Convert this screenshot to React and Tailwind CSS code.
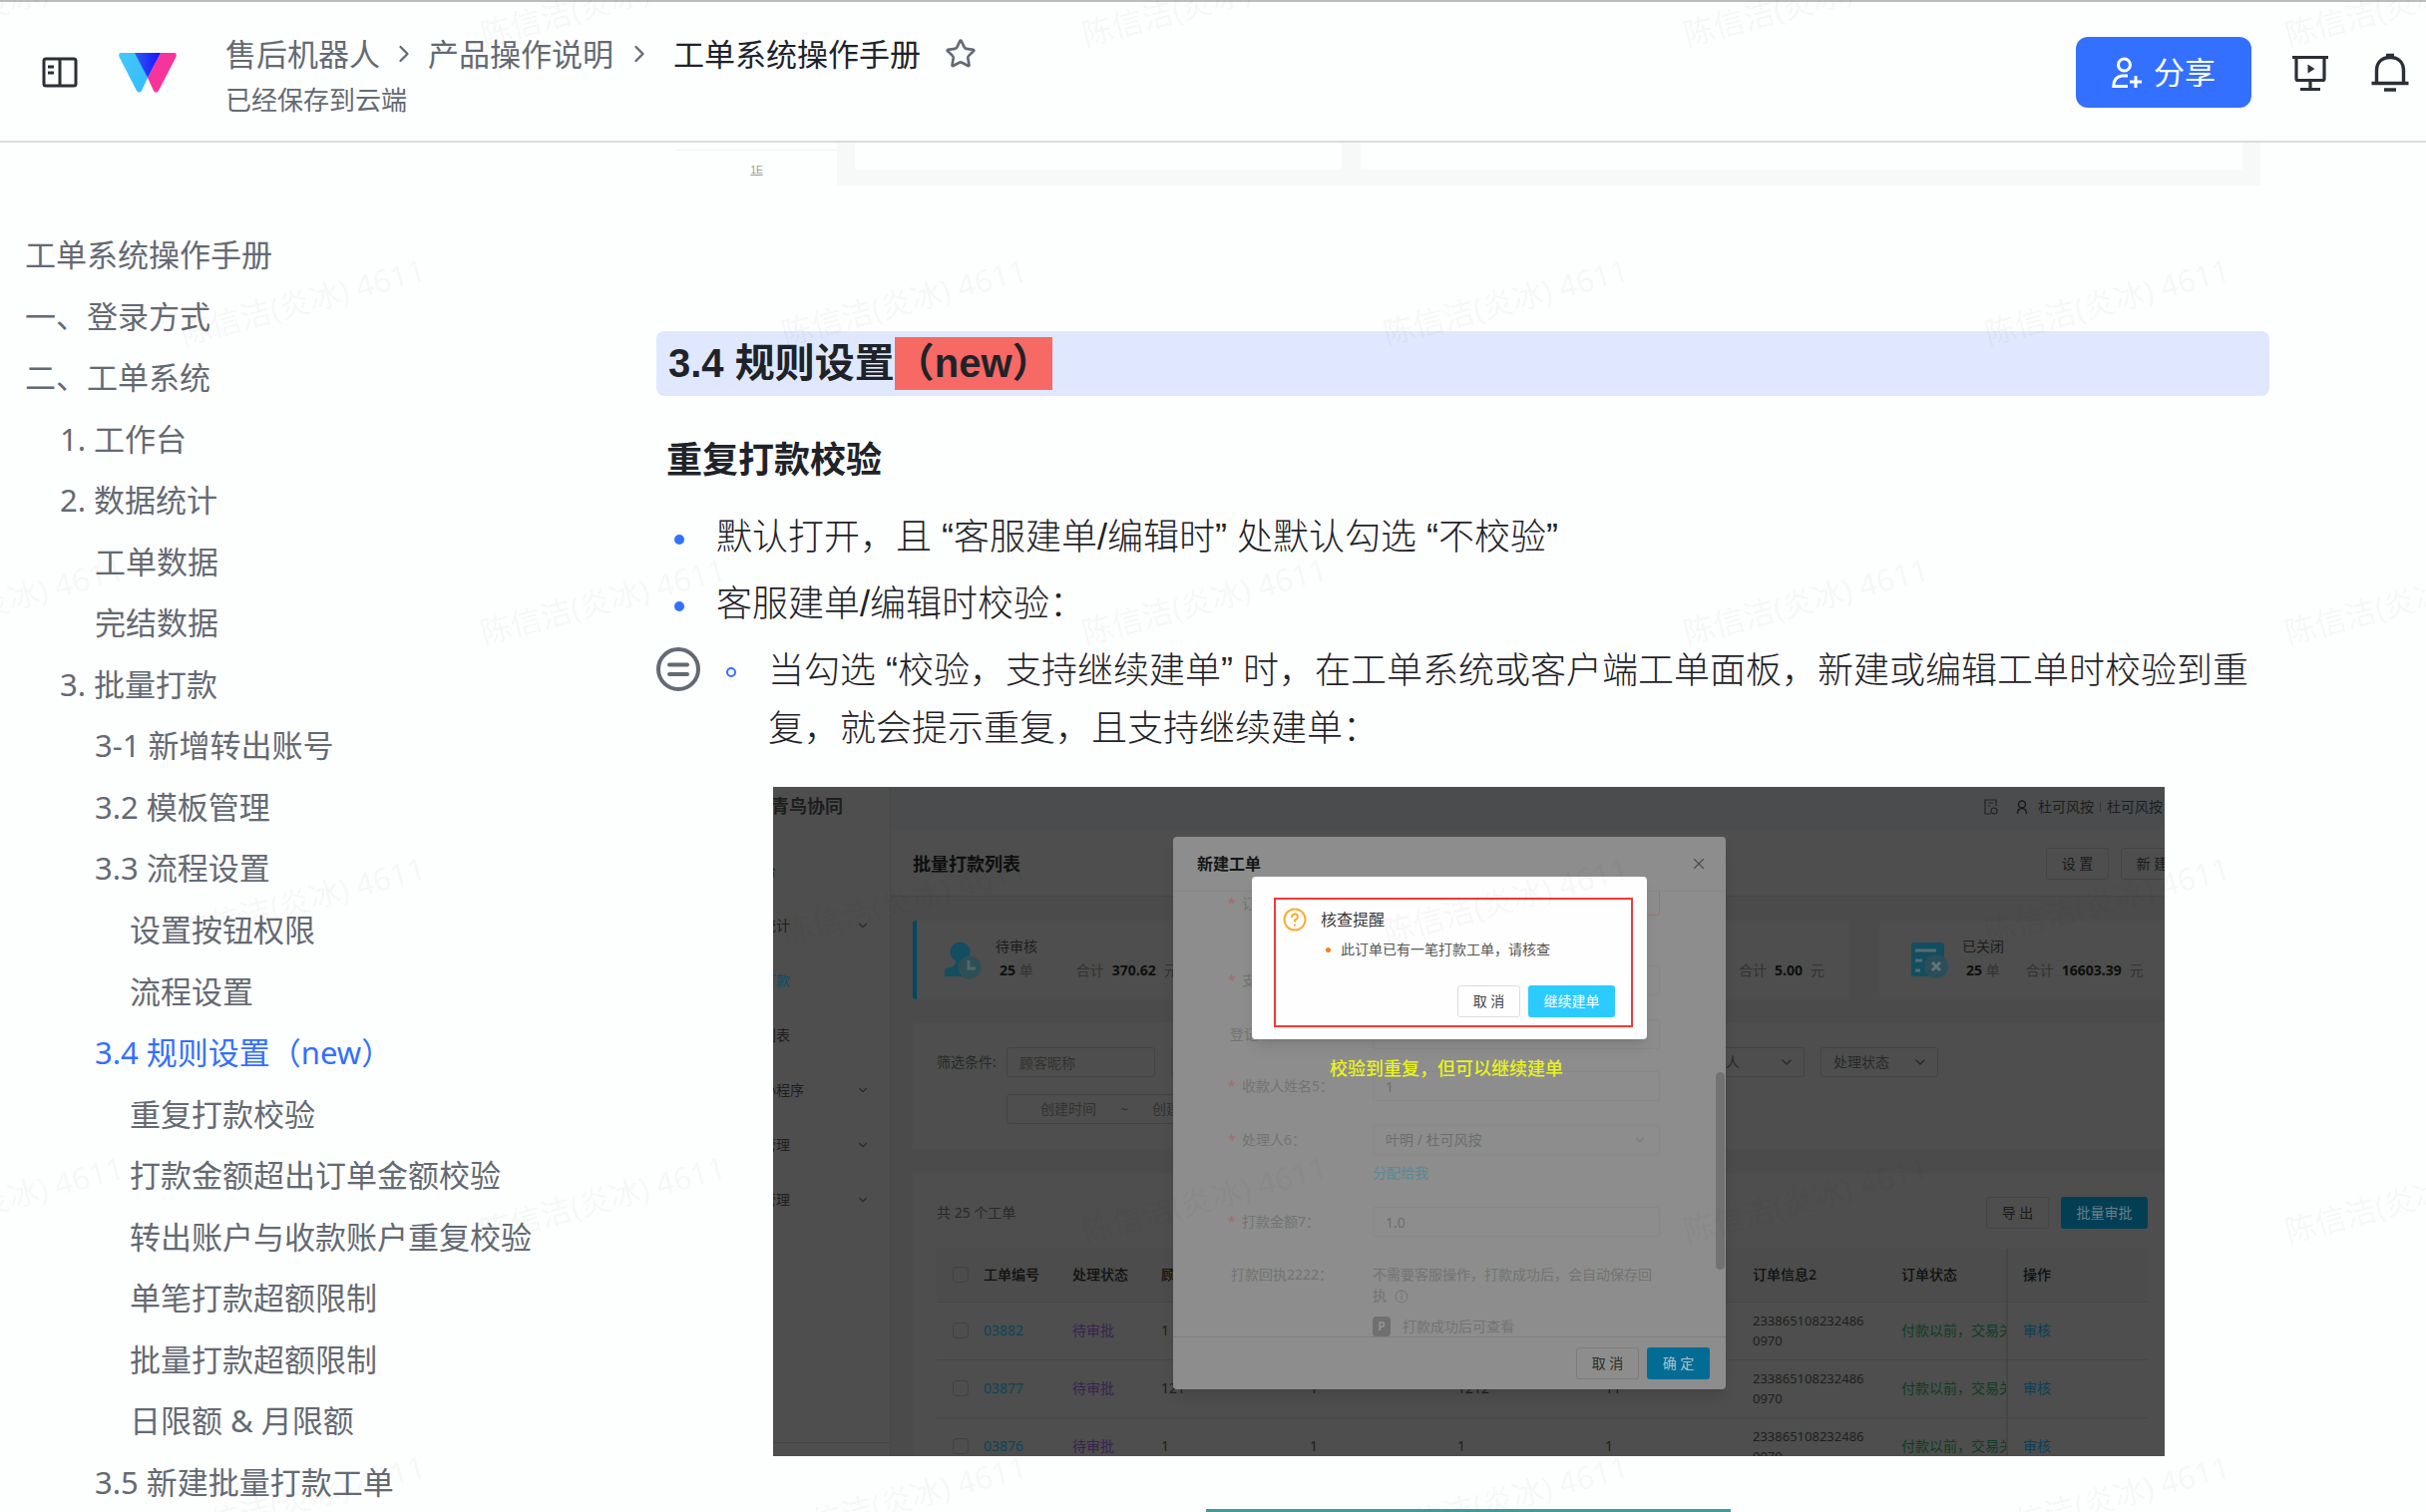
import React from "react";
import { ChevronRight, ChevronDown, X, Star } from "lucide-react";

const outline = [
  ["工单系统操作手册", 0],
  ["一、登录方式", 0],
  ["二、工单系统", 0],
  ["1. 工作台", 1],
  ["2. 数据统计", 1],
  ["工单数据", 2],
  ["完结数据", 2],
  ["3. 批量打款", 1],
  ["3-1 新增转出账号", 2],
  ["3.2 模板管理", 2],
  ["3.3 流程设置", 2],
  ["设置按钮权限", 3],
  ["流程设置", 3],
  ["3.4 规则设置（new）", 2, true],
  ["重复打款校验", 3],
  ["打款金额超出订单金额校验", 3],
  ["转出账户与收款账户重复校验", 3],
  ["单笔打款超额限制", 3],
  ["批量打款超额限制", 3],
  ["日限额 & 月限额", 3],
  ["3.5 新建批量打款工单", 2],
];

const indents = ["pl-[25px]", "pl-[60px]", "pl-[95px]", "pl-[130px]"];

function Logo() {
  return (
    <svg viewBox="0 0 58 40" className="h-10 w-[58px]" aria-hidden="true">
      <defs>
        <linearGradient id="lg-blue" x1="0" x2="1" y1="0" y2="0">
          <stop offset="0" stopColor="#2a5cf0" />
          <stop offset="1" stopColor="#1a10ff" />
        </linearGradient>
        <linearGradient id="lg-cyan" x1="0" x2="1" y1="0" y2="1">
          <stop offset="0" stopColor="#45c8fb" />
          <stop offset="1" stopColor="#30bdf8" />
        </linearGradient>
      </defs>
      <path d="M2 0 H17 L29 25 L23 38 Q20.500 41 18 38 L0.500 4 Q-0.500 0 2 0Z" fill="url(#lg-cyan)" />
      <path d="M42 0 H56 Q58.500 0 57.500 4 L40 38 Q37.500 41 35 38 L29 25Z" fill="#f5359c" />
      <path d="M16 0 H42 L29 25Z" fill="url(#lg-blue)" />
    </svg>
  );
}

function Header() {
  return (
    <header className="flex h-[143px] shrink-0 items-center border-t-2 border-b-2 border-t-[#bcbcbc] border-b-[#dadcdb] pt-0.5 pr-[17px] pl-[42px] text-[#2b2f36]">
      <button aria-label="目录" className="h-9 w-9">
        <svg viewBox="0 0 36 36" className="h-9 w-9" fill="none" stroke="currentColor" strokeWidth="3">
          <rect x="2" y="4" width="32" height="27" rx="2" />
          <path d="M18 4V31M6 12h6M6 18h6" />
        </svg>
      </button>
      <a href="#home" aria-label="主页" className="ml-[41px]">
        <Logo />
      </a>
      <div className="ml-[49px] flex flex-col gap-1 pt-1.5">
        <nav aria-label="路径" className="flex items-center text-[31px] leading-[44px] text-[#646a73]">
          <a href="#robot">售后机器人</a>
          <ChevronRight className="mx-2.5 h-7 w-7" strokeWidth={2} />
          <a href="#product">产品操作说明</a>
          <ChevronRight className="mr-5 ml-3 h-7 w-7" strokeWidth={2} />
          <span className="text-[#1f2329]">工单系统操作手册</span>
          <button aria-label="收藏" className="ml-6">
            <Star className="h-8 w-8" strokeWidth={2} />
          </button>
        </nav>
        <div className="text-[26px] leading-[40px] text-[#646a73]">已经保存到云端</div>
      </div>
      <button className="ml-auto flex h-[71px] w-44 items-center justify-center gap-3 rounded-xl bg-[#3370ff] text-[31px] text-white">
        <svg viewBox="0 0 30 32" className="h-8 w-[30px]" fill="none" stroke="currentColor" strokeWidth="3">
          <circle cx="12.500" cy="8" r="6" />
          <path d="M16 19H10Q2 20 1.800 29.500H16" />
          <path d="M18 25H30M24 19V31" />
        </svg>
        分享
      </button>
      <button aria-label="演示" className="ml-10">
        <svg viewBox="0 0 38 38" className="h-[38px] w-[38px]" fill="none" stroke="currentColor" strokeWidth="3.200">
          <path d="M1 3.500H37M5 3.500V25Q5 26.500 6.500 26.500H31.500Q33 26.500 33 25V3.500M19 27V35M9 35.500H29" />
          <path d="M16.500 10.500L23.500 15L16.500 19.500Z" fill="currentColor" stroke="none" />
        </svg>
      </button>
      <button aria-label="通知" className="ml-[42px]">
        <svg viewBox="0 0 38 40" className="h-10 w-[38px]" fill="none" stroke="currentColor" strokeWidth="3.400">
          <path d="M5.500 30V18C5.500 9 11 4.500 19 4.500S32.500 9 32.500 18V30M0.500 30.500H37.500M13 37H25M15 2.500H23" />
        </svg>
      </button>
    </header>
  );
}

function Outline() {
  return (
    <aside className="flex w-[658px] shrink-0 flex-col pt-[82px]">
      <nav aria-label="目录" className="flex flex-1 flex-col justify-between text-[31px] leading-[60px] text-[#646a73]">
        {outline.map(([label, level, active], i) => (
          <a
            key={i}
            href={"#s" + i}
            className={`${indents[level]} h-[60px] whitespace-nowrap ${active ? "text-[#3370ff]" : ""}`}
          >
            {label}
          </a>
        ))}
      </nav>
    </aside>
  );
}

const menu = [
  ["台", false],
  ["统计", true],
  ["打款", false, true],
  ["列表", false],
  ["小程序", true],
  ["管理", true],
  ["管理", true],
];

function StatusIcon({ closed }) {
  return (
    <svg viewBox="0 0 38 38" className="h-[38px] w-[38px] shrink-0" aria-hidden="true">
      {closed ? (
        <>
          <rect x="0" y="1" width="33" height="34" rx="3" fill="#124e60" />
          <path d="M4 9H25M4 19H11M4 29H9" stroke="#5a6b70" strokeWidth="3" />
          <circle cx="25" cy="25" r="12" fill="#2b4f5a" />
          <path d="M21 21L29 29M29 21L21 29" stroke="#647478" strokeWidth="3" />
        </>
      ) : (
        <>
          <circle cx="15.500" cy="10.500" r="10" fill="#124e60" />
          <path d="M11 17H21V23L30 27V35H0V30Q0 26 5 26Q10 25 11 22Z" fill="#124e60" />
          <circle cx="25" cy="26" r="11.500" fill="#2f4f57" />
          <path d="M24 19V27H31" fill="none" stroke="#56656a" strokeWidth="3" />
        </>
      )}
    </svg>
  );
}

function StatCard({ accent, closed, label, count, total, gap }) {
  return (
    <div
      className={`flex h-[79px] w-[294px] shrink-0 items-center rounded-[3px] bg-[#4d4e4d] ${
        accent ? "border-l-4 border-[#034860] pl-[28px]" : "pl-8"
      }`}
    >
      {label && (
        <>
          <StatusIcon closed={closed} />
          <div className="mb-1 ml-[13px]">
            <div className="leading-6 text-[#1c1d1c]">{label}</div>
            <div className="flex gap-1.5 pl-1 leading-6 whitespace-nowrap text-[#323332]">
              <span>
                <b className="text-[#0e0f0e]">{count}</b> 单
              </span>
              <span className={gap}>合计</span>
              <b className="ml-0.5 text-[#0e0f0e]">{total}</b>
              <span className="ml-0.5">元</span>
            </div>
          </div>
        </>
      )}
      {!label && total && (
        <div className="mt-5 ml-[150px] flex gap-2 text-[#323332]">
          合计 <b className="text-[#0e0f0e]">{total}</b> 元
        </div>
      )}
    </div>
  );
}

const rows = [
  ["03882", "1", "1", "1", "1"],
  ["03877", "121", "1", "1212", "11"],
  ["03876", "1", "1", "1", "1"],
];

const darkButton = "h-8 w-[63px] shrink-0 rounded-[3px] border border-[#434443] bg-[#4d4e4d] text-[#1a1b1a]";

function ListScreen() {
  return (
    <div className="flex h-full bg-[#4a4b4a] text-sm text-[#1d1e1d]">
      <div className="flex w-[118px] shrink-0 flex-col border-r border-[#464746] bg-[#4d4e4d]">
        <div className="-ml-0.5 h-14 text-lg leading-[38px] font-bold whitespace-nowrap">青鸟协同</div>
        {menu.map(([label, more, active], i) => (
          <a
            key={i}
            href={"#menu" + i}
            className={`flex h-[55px] items-center justify-between pr-5 ${active ? "text-[#0a4d68]" : ""}`}
          >
            <span className="-ml-[11px]">{label}</span>
            {more && <ChevronDown className="h-3.5 w-3.5 text-[#2b2c2b]" />}
          </a>
        ))}
        <div className="mt-auto h-[14px] border-t border-[#434443]" />
      </div>

      <div className="min-w-0 flex-1">
        <div className="flex h-[43px] items-center justify-end bg-[#4a4c4e] pr-0.5 pb-1">
          <svg viewBox="0 0 14 16" className="h-4 w-3.5" fill="none" stroke="#222" strokeWidth="1.200">
            <path d="M12 7V1H1V15H7M4 4H9M4 7H6" />
            <circle cx="10" cy="12" r="3" />
          </svg>
          <svg viewBox="0 0 12 14" className="mr-2.5 ml-[18px] h-3.5 w-3" fill="none" stroke="#1a1a1a" strokeWidth="1.400">
            <circle cx="6" cy="4.500" r="3.500" />
            <path d="M1.500 14Q1.500 8.500 6 8.500T10.500 14" />
          </svg>
          <span>杜可风按</span>
          <span className="mx-1.5 h-2.5 w-px bg-[#353635]" />
          <span>杜可风按</span>
        </div>

        <div className="flex h-[67px] items-center gap-3 overflow-hidden border-b border-[#454645] bg-[#4d4e4d] pt-0.5 pl-[22px]">
          <h4 className="mr-auto text-lg font-bold text-[#0e0f0e]">批量打款列表</h4>
          <button className={darkButton}>设 置</button>
          <button className={`${darkButton} -mr-[19px]`}>新 建</button>
        </div>

        <div className="mt-6 flex gap-[29px] overflow-hidden pl-[22px]">
          <StatCard accent label="待审核" count="25" total="370.62" gap="ml-[37px]" />
          <StatCard />
          <StatCard total="5.00" />
          <StatCard closed label="已关闭" count="25" total="16603.39" gap="ml-5" />
        </div>

        <div className="mt-[23px] ml-[22px] h-[127px] bg-[#4d4e4d] pt-[25px] pl-6 text-[#282928]">
          <div className="flex h-[30px] items-center">
            <label htmlFor="nick" className="w-[70px] shrink-0">
              筛选条件:
            </label>
            <input
              id="nick"
              placeholder="顾客昵称"
              className="h-[30px] w-[149px] rounded-[3px] border border-[#424342] bg-transparent px-3 placeholder:text-[#313231]"
            />
            <span className="ml-4 h-[30px] w-[150px] rounded-[3px] border border-[#424342]" />
            <button className="mr-4 ml-auto flex h-[30px] w-[118px] items-center justify-between rounded-[3px] border border-[#424342] pr-[9px] pl-[38px]">
              人 <ChevronDown className="h-4 w-4" />
            </button>
            <button className="mr-[227px] flex h-[30px] w-[118px] items-center justify-between rounded-[3px] border border-[#424342] pr-[9px] pl-3">
              处理状态 <ChevronDown className="h-4 w-4" />
            </button>
          </div>
          <div className="mt-[17px] ml-[70px] flex h-[30px] w-[260px] items-center rounded-[3px] border border-[#424342] pl-[33px] text-[#313231]">
            创建时间 <span className="mx-6">~</span> 创建时间
          </div>
        </div>

        <div className="mt-6 ml-[22px] bg-[#4d4e4d] pt-6 pr-[17px] pl-6">
          <div className="flex h-8 items-center gap-3">
            <span className="mr-auto text-[#282928]">共 25 个工单</span>
            <button className={darkButton}>导 出</button>
            <button className="h-8 w-[87px] rounded-[3px] bg-[#023f54] text-[#6a7d84]">批量审批</button>
          </div>
          <table className="mt-5 w-full table-fixed text-left">
            <colgroup>
              <col className="w-[47px]" />
              <col className="w-[89px]" />
              <col className="w-[89px]" />
              <col className="w-[149px]" />
              <col className="w-[148px]" />
              <col className="w-[148px]" />
              <col className="w-[148px]" />
              <col className="w-[149px]" />
              <col className="w-[106px]" />
              <col />
            </colgroup>
            <thead>
              <tr className="h-[53px] border-b border-[#454645] bg-[#4b4c4b] text-[#0f100f]">
                <th className="pl-4">
                  <input type="checkbox" aria-label="全选" className="block h-4 w-4 appearance-none rounded-sm border border-[#404140]" />
                </th>
                <th className="font-medium">工单编号</th>
                <th className="font-medium">处理状态</th>
                <th className="font-medium">顾客</th>
                <th />
                <th />
                <th />
                <th className="font-medium">订单信息2</th>
                <th className="font-medium">订单状态</th>
                <th className="border-l-2 border-[#444544] pl-[15px] font-medium">操作</th>
              </tr>
            </thead>
            <tbody>
              {rows.map((r) => (
                <tr key={r[0]} className="h-[58px] border-b border-[#454645]">
                  <td className="pl-4">
                    <input type="checkbox" aria-label={r[0]} className="block h-4 w-4 appearance-none rounded-sm border border-[#404140]" />
                  </td>
                  <td className="text-[#0d4458]">
                    <a href={"#o" + r[0]}>{r[0]}</a>
                  </td>
                  <td className="text-[#38234f]">待审批</td>
                  <td>{r[1]}</td>
                  <td>{r[2]}</td>
                  <td>{r[3]}</td>
                  <td>{r[4]}</td>
                  <td className="text-[13px] leading-5">
                    233865108232486
                    <br />
                    0970
                  </td>
                  <td className="overflow-hidden whitespace-nowrap text-[#0f3d24]">付款以前，交易关闭</td>
                  <td className="border-l-2 border-[#444544] pl-[15px] text-[#0a3f5c]">
                    <a href={"#a" + r[0]}>审核</a>
                  </td>
                </tr>
              ))}
            </tbody>
          </table>
        </div>
      </div>
    </div>
  );
}

function Field({ id, label, required, className, children }) {
  return (
    <div className={`flex ${className}`}>
      <label htmlFor={id} className="flex w-[145px] shrink-0 gap-1.5 self-center pl-0.5 whitespace-nowrap">
        {required && <span className="-ml-0.5 w-2 text-[#a86a6b]">*</span>}
        {label}
      </label>
      {children}
    </div>
  );
}

const grayInput = "h-[30px] w-72 rounded-[3px] border border-[#868786] bg-transparent px-3 text-[#6c6d6c]";

function OrderModal() {
  return (
    <div className="absolute top-[50px] left-[401px] flex h-[554px] w-[554px] flex-col rounded bg-[#8c8d8c] text-sm text-[#737473] shadow-lg">
      <div className="flex h-[55px] shrink-0 items-center justify-between border-b border-[#868786] pr-[18px] pl-6 text-base font-bold text-[#151615]">
        新建工单
        <button aria-label="关闭" className="text-[#4a4b4a]">
          <X className="h-[18px] w-[18px]" strokeWidth={1.5} />
        </button>
      </div>
      <div className="flex flex-1 overflow-hidden">
        <div className="flex-1 pl-[55px]">
          <Field id="f1" label="订单" required className="mb-[50px] h-6">
            <input id="f1" className="-mt-1.5 h-[30px] w-72 rounded-[3px] border border-[#a37171]" />
          </Field>
          <Field id="f2" label="支付" required className="mb-6 h-[30px]">
            <input id="f2" className={grayInput} />
          </Field>
          <Field id="f3" label="登记" className="mb-[22px] h-[30px]">
            <input id="f3" className={grayInput} />
          </Field>
          <Field id="f4" label="收款人姓名5：" required className="mb-6 h-[30px]">
            <input id="f4" defaultValue="1" className={grayInput} />
          </Field>
          <Field id="f5" label="处理人6：" required className="h-[30px]">
            <button id="f5" className={`${grayInput} flex items-center justify-between`}>
              叶明 / 杜可风按 <ChevronDown className="h-3.5 w-3.5 text-[#7a7b7a]" />
            </button>
          </Field>
          <a href="#me" className="mt-2 mb-6 ml-[145px] block leading-5 text-[#568a98]">
            分配给我
          </a>
          <Field id="f7" label="打款金额7：" required className="h-[30px]">
            <input id="f7" defaultValue="1.0" className={grayInput} />
          </Field>
          <div className="mt-[27px] flex leading-[21px]">
            <span className="w-[145px] shrink-0 pl-[3px]">打款回执2222：</span>
            <div className="w-[282px] shrink-0">
              不需要客服操作，打款成功后，会自动保存回执
              <svg viewBox="0 0 14 14" className="ml-2 inline h-3.5 w-3.5" fill="none" stroke="currentColor">
                <circle cx="7" cy="7" r="6" />
                <path d="M7 6V10.500M7 3.500V5" />
              </svg>
              <div className="mt-2.5 flex items-center gap-3">
                <span className="flex h-5 w-[18px] items-center justify-center rounded-sm bg-[#6f706f] text-xs font-bold text-[#909190]">P</span>
                打款成功后可查看
              </div>
            </div>
          </div>
        </div>
        <div className="mt-[181px] mr-px h-[198px] w-[9px] rounded-full bg-[#717271]" />
      </div>
      <div className="flex h-[53px] shrink-0 items-center justify-end gap-2 border-t border-[#7d7e7d] pr-4">
        <button className="h-8 w-[63px] rounded-[3px] border border-[#7c7d7c] text-[#2c2d2c]">取 消</button>
        <button className="h-8 w-[63px] rounded-[3px] bg-[#026c94] text-[#a9c3cd]">确 定</button>
      </div>
    </div>
  );
}

function ConfirmDialog() {
  return (
    <div className="absolute top-[90px] left-[480px] h-[163px] w-[396px] rounded bg-[#fefefe] px-[22px] pt-[21px] text-sm text-[#555] shadow-lg">
      <div className="flex h-[130px] w-[360px] flex-col border-2 border-[#f83838] pt-2 pr-4 pl-[7px]">
        <div className="flex h-6 items-center gap-3.5 text-base text-[#3a3a3a]">
          <svg viewBox="0 0 24 24" className="h-6 w-6" fill="none" stroke="#faad33" strokeWidth="2">
            <circle cx="12" cy="12" r="10.500" />
            <path d="M9 10Q9 6.500 12 6.500T15 9.500Q15 11 12 12.500V14.500M12 16.500V18.500" />
          </svg>
          核查提醒
        </div>
        <div className="mt-1.5 flex h-6 items-center gap-2.5 pl-[43px] whitespace-nowrap">
          <span className="h-[5px] w-[5px] rounded-full bg-[#fa8010]" />
          此订单已有一笔打款工单，请核查
        </div>
        <div className="mt-6 flex justify-end gap-2">
          <button className="h-8 w-[63px] rounded-[3px] border border-[#dcdcdc] text-[#444]">取 消</button>
          <button className="h-8 w-[87px] rounded-[3px] bg-[#2bcbff] text-white">继续建单</button>
        </div>
      </div>
    </div>
  );
}

function Article() {
  return (
    <main className="mr-[157px] flex min-w-0 flex-1 flex-col text-[36px] leading-[58px] text-[#1f2329]">
      <div className="flex h-[43px] shrink-0 pr-[9px] pl-5">
        <div className="mt-[7px] flex w-[161px] justify-center border-t border-[#f0f1f0] pt-3 text-[10px] leading-4 text-[#999] underline">
          1E
        </div>
        <div className="flex flex-1 gap-[19px] bg-[#f7f8f8] px-[18px] pb-4">
          <div className="w-[488px] bg-[#fdfefe]" />
          <div className="flex-1 bg-[#fdfefe]" />
        </div>
      </div>

      <h2 className="mt-[146px] flex h-[65px] shrink-0 items-center rounded-lg bg-[#dfe8ff] pl-3 text-[40px] leading-[53px] font-bold">
        3.4 规则设置<mark className="bg-[#f76964] text-inherit">（new）</mark>
      </h2>
      <h3 className="mt-9 pl-2.5 font-bold">重复打款校验</h3>

      <ul className="mt-[19px] flex flex-col gap-[9px] font-light">
        <li className="flex items-center gap-8 pl-[18px]">
          <span className="mt-[3px] h-2.5 w-2.5 rounded-full bg-[#3370ff]" />
          <span>默认打开，且 “客服建单/编辑时” 处默认勾选 “不校验”</span>
        </li>
        <li className="flex items-center gap-8 pl-[18px]">
          <span className="mt-[3px] h-2.5 w-2.5 rounded-full bg-[#3370ff]" />
          <span>客服建单/编辑时校验：</span>
        </li>
        <li className="flex items-start">
          <button aria-label="拖动" className="mt-[5px] shrink-0">
            <svg viewBox="0 0 44 44" className="h-11 w-11" fill="none" stroke="#646a73" strokeWidth="4">
              <circle cx="22" cy="22" r="20" />
              <path d="M13 17.500H31M13 27H31" strokeLinecap="round" />
            </svg>
          </button>
          <span className="mt-[25px] mr-8 ml-[26px] h-2.5 w-2.5 shrink-0 rounded-full border-2 border-[#3370ff]" />
          <span>
            当勾选 “校验，支持继续建单” 时，在工单系统或客户端工单面板，新建或编辑工单时校验到重复，就会提示重复，且支持继续建单：
          </span>
        </li>
      </ul>

      <figure className="relative mt-[29px] ml-[117px] h-[671px] max-w-[1395px] shrink-0 overflow-hidden font-['Noto_Sans','Noto_Sans_CJK_SC',sans-serif] leading-normal">
        <ListScreen />
        <OrderModal />
        <ConfirmDialog />
        <figcaption className="absolute top-[268px] left-[558px] text-lg font-medium whitespace-nowrap text-[#eaf21c]">
          校验到重复，但可以继续建单
        </figcaption>
      </figure>
      <div className="mt-[53px] ml-[551px] h-[3px] w-[526px] shrink-0 bg-[#3d9b9f]" />
    </main>
  );
}

function Watermark() {
  return (
    <div aria-hidden="true" className="pointer-events-none absolute inset-0 overflow-hidden">
      <div className="-mt-[148px]">
        {[0, 1, 2, 3, 4, 5].map((r) => (
          <div key={r} className={`flex h-[300px] ${r % 2 ? "ml-0.5" : "-ml-[300px]"}`}>
            {[0, 1, 2, 3, 4].map((c) => (
              <div key={c} className="flex w-[603px] shrink-0 items-center justify-center">
                <span className="-rotate-15 text-[31px] whitespace-nowrap text-[#1f2329]/5">陈信洁(炎冰) 4611</span>
              </div>
            ))}
          </div>
        ))}
      </div>
    </div>
  );
}

export default function App() {
  return (
    <div className="relative flex h-screen flex-col overflow-hidden bg-[#fdfefe] font-['Noto_Sans','Noto_Sans_CJK_SC',sans-serif]">
      <Header />
      <div className="flex min-h-0 flex-1">
        <Outline />
        <div className="flex min-w-0 flex-1 font-['Liberation_Sans','Noto_Sans_CJK_SC',sans-serif]">
          <Article />
        </div>
      </div>
      <Watermark />
    </div>
  );
}
